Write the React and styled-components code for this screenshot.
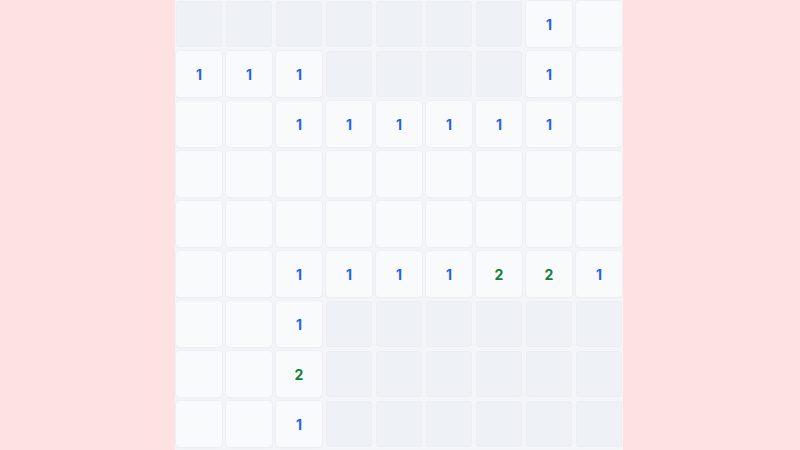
import React from 'react'
import styled, { createGlobalStyle } from 'styled-components'

const GlobalStyle = createGlobalStyle`
  body {
    margin: 0;
    background: #fee2e2;
    font-family: Inter, "Noto Sans", sans-serif;
    overflow: hidden;
  }
`

const Page = styled.div`
  height: 450px;
  padding-right: 2px;
  display: flex;
  justify-content: center;
  align-items: flex-start;
`

const Board = styled.div`
  display: grid;
  grid-template-columns: repeat(9, 46px);
  grid-auto-rows: 46px;
  gap: 4px;
  padding: 1px 1px 3px;
  background: #f3f5f8;
`

const Cell = styled.div`
  display: flex;
  align-items: center;
  justify-content: center;
  border-radius: 4px;
  font-size: 14px;
  font-weight: 700;
  background: ${p => (p.$open ? '#f9fafc' : '#eef1f5')};
  box-shadow: ${p =>
    p.$open
      ? '0 0 0 1px #eceff3, 0 1px 2px rgba(15, 23, 42, 0.06)'
      : 'inset 0 0 0 1px #ebeef3'};
  color: ${p => (p.$n === 2 ? '#15803d' : '#2563eb')};
`

// U = hidden, R = revealed empty, digits = revealed count
const rows = [
  'UUUUUUU1R',
  '111UUUU1R',
  'RR111111R',
  'RRRRRRRRR',
  'RRRRRRRRR',
  'RR1111221',
  'RR1UUUUUU',
  'RR2UUUUUU',
  'RR1UUUUUU',
]

export default function App() {
  return (
    <>
      <GlobalStyle />
      <Page>
        <Board>
          {rows.map((row, r) =>
            row.split('').map((c, i) => {
              const open = c !== 'U'
              const n = /\d/.test(c) ? Number(c) : 0
              return (
                <Cell key={r + '-' + i} $open={open} $n={n}>
                  {n > 0 ? n : ''}
                </Cell>
              )
            })
          )}
        </Board>
      </Page>
    </>
  )
}
